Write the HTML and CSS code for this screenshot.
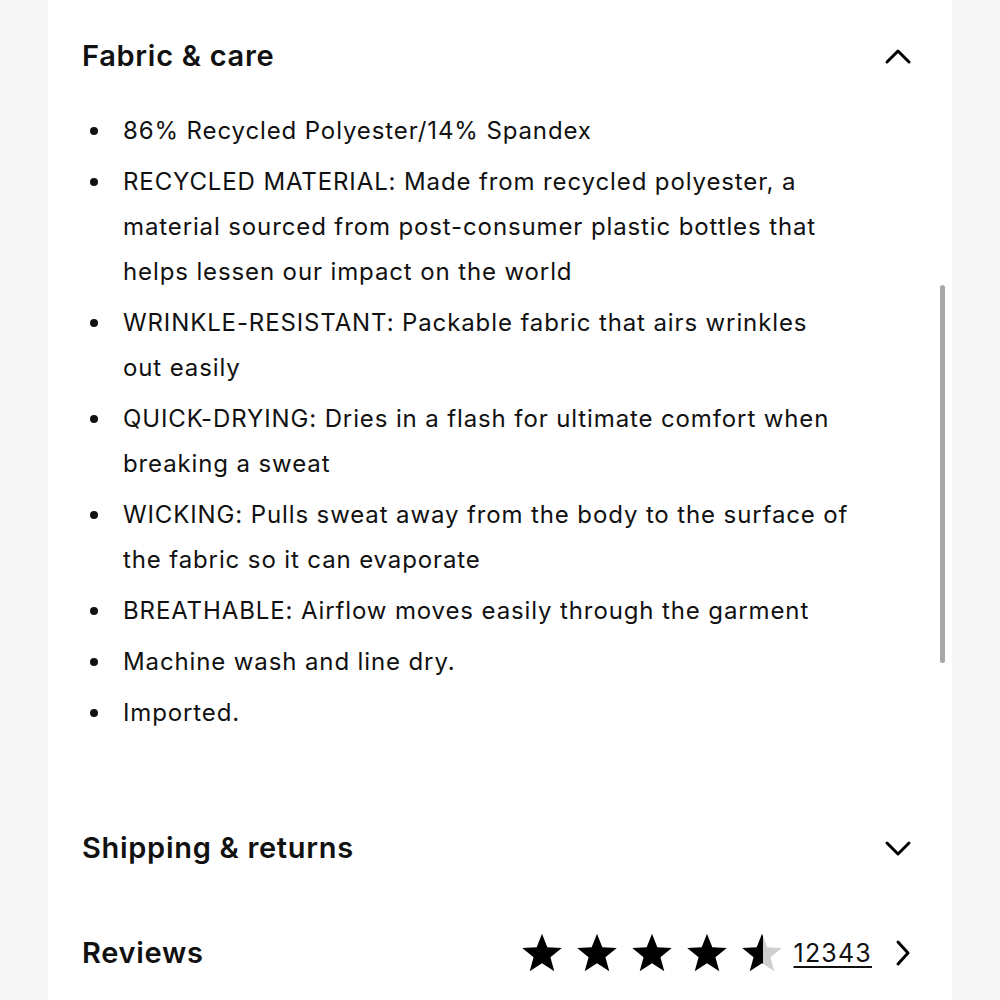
FILE: index.html
```html
<!DOCTYPE html>
<html lang="en">
<head>
<meta charset="utf-8">
<title>Fabric &amp; care</title>
<link rel="stylesheet" href="styles.css">
</head>
<body>
<div class="panel">
  <section class="section">
    <div class="head head-first">
      <h2 class="title">Fabric &amp; care</h2>
      <svg class="chev" width="28" height="18" viewBox="0 0 28 18"><polyline points="3,15 14,4 25,15" fill="none" stroke="#000" stroke-width="3" stroke-linecap="round" stroke-linejoin="round"/></svg>
    </div>
    <ul class="list">
      <li>86% Recycled Polyester/14% Spandex</li>
      <li>RECYCLED MATERIAL: Made from recycled polyester, a material sourced from post-consumer plastic bottles that helps lessen our impact on the world</li>
      <li>WRINKLE-RESISTANT: Packable fabric that airs wrinkles out easily</li>
      <li>QUICK-DRYING: Dries in a flash for ultimate comfort when breaking a sweat</li>
      <li>WICKING: Pulls sweat away from the body to the surface of the fabric so it can evaporate</li>
      <li>BREATHABLE: Airflow moves easily through the garment</li>
      <li>Machine wash and line dry.</li>
      <li>Imported.</li>
    </ul>
  </section>
  <section class="section">
    <div class="head head-ship">
      <h2 class="title">Shipping &amp; returns</h2>
      <svg class="chev" width="28" height="18" viewBox="0 0 28 18"><polyline points="3,4 14,15 25,4" fill="none" stroke="#000" stroke-width="3" stroke-linecap="round" stroke-linejoin="round"/></svg>
    </div>
  </section>
  <section class="section">
    <div class="head head-rev">
      <h2 class="title">Reviews</h2>
      <div class="rating">
        <div class="stars">
          <svg class="star" viewBox="0 0 24 24"><path d="M12 1.5l2.9 7.4 7.9.4-6.2 5 2.1 7.7L12 17.6 5.3 22l2.1-7.7-6.2-5 7.9-.4z" fill="#000"/></svg>
          <svg class="star" viewBox="0 0 24 24"><path d="M12 1.5l2.9 7.4 7.9.4-6.2 5 2.1 7.7L12 17.6 5.3 22l2.1-7.7-6.2-5 7.9-.4z" fill="#000"/></svg>
          <svg class="star" viewBox="0 0 24 24"><path d="M12 1.5l2.9 7.4 7.9.4-6.2 5 2.1 7.7L12 17.6 5.3 22l2.1-7.7-6.2-5 7.9-.4z" fill="#000"/></svg>
          <svg class="star" viewBox="0 0 24 24"><path d="M12 1.5l2.9 7.4 7.9.4-6.2 5 2.1 7.7L12 17.6 5.3 22l2.1-7.7-6.2-5 7.9-.4z" fill="#000"/></svg>
          <svg class="star" viewBox="0 0 24 24"><defs><linearGradient id="half"><stop offset="53%" stop-color="#000"/><stop offset="53%" stop-color="#cfcfcf"/></linearGradient></defs><path d="M12 1.5l2.9 7.4 7.9.4-6.2 5 2.1 7.7L12 17.6 5.3 22l2.1-7.7-6.2-5 7.9-.4z" fill="url(#half)"/></svg>
        </div>
        <a class="count" href="#">12343</a>
        <svg class="chev-right" width="18" height="28" viewBox="0 0 18 28"><polyline points="4,3 14,14 4,25" fill="none" stroke="#000" stroke-width="3" stroke-linecap="round" stroke-linejoin="round"/></svg>
      </div>
    </div>
  </section>
  <div class="scrollbar"></div>
</div>
</body>
</html>
```

FILE: styles.css
```css
html, body {
  margin: 0;
  padding: 0;
}
body {
  background: #f7f7f7;
  font-family: "Inter", "Open Sans", sans-serif;
  color: #111;
}
.panel {
  position: relative;
  margin: 0 48px;
  background: #fff;
  min-height: 1000px;
  padding: 0 42px 0 34px;
  box-sizing: border-box;
}
.head {
  display: flex;
  align-items: center;
  justify-content: space-between;
  height: 72px;
}
.head-first {
  padding-top: 20px;
}
.head-ship {
  margin-top: 77px;
}
.head-rev {
  margin-top: 33px;
}
.title {
  margin: 0;
  font-size: 29px;
  font-weight: 600;
  line-height: 36px;
  letter-spacing: 0.7px;
  color: #111;
}
.chev {
  display: block;
  margin-right: -2px;
}
.list {
  list-style: none;
  margin: 16px 58px 0 0;
  padding: 0;
}
.list li {
  display: grid;
  grid-template-columns: 41px 1fr;
  font-size: 24px;
  line-height: 45px;
  letter-spacing: 0.88px;
  margin-bottom: 6px;
  color: #111;
}
.list li:last-child {
  margin-bottom: 0;
}
.list li::before {
  content: "";
  width: 8px;
  height: 8px;
  border-radius: 50%;
  background: #111;
  margin: 19px 0 0 8px;
}
.rating {
  display: flex;
  align-items: center;
}
.stars {
  display: flex;
  gap: 11px;
}
.star {
  width: 44px;
  height: 44px;
  display: block;
}
.count {
  margin-left: 10px;
  font-size: 25px;
  letter-spacing: 1.2px;
  color: #111;
  text-decoration: underline;
  text-underline-offset: 4px;
  text-decoration-thickness: 2px;
}
.chev-right {
  display: block;
  margin-left: 22px;
  margin-right: -2px;
}
.scrollbar {
  position: absolute;
  left: 892px;
  top: 285px;
  width: 5px;
  height: 378px;
  border-radius: 3px;
  background: #a8a8a8;
}
```
